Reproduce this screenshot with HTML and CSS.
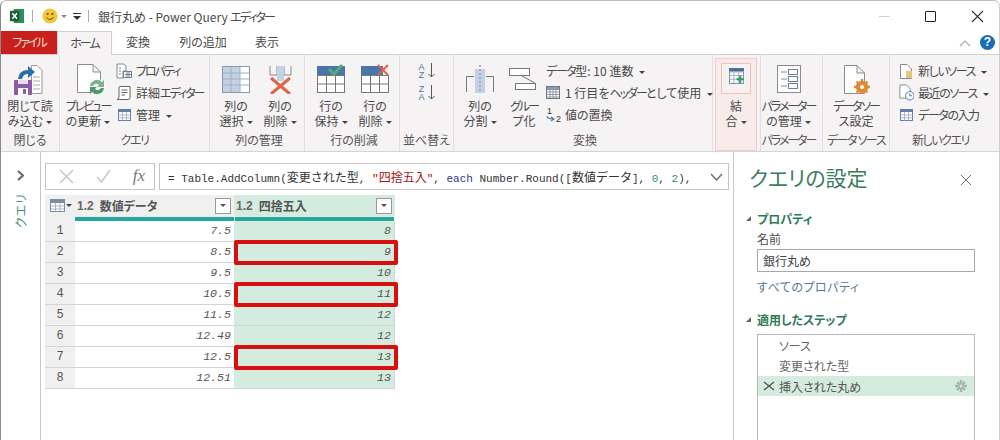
FILE: index.html
```html
<!DOCTYPE html>
<html lang="ja">
<head>
<meta charset="utf-8">
<title>銀行丸め - Power Query エディター</title>
<link rel="stylesheet" href="styles.css">
</head>
<body>
<div class="window">
  <header class="titlebar">
    <svg width="16" height="16" viewBox="0 0 17 17"><rect x="5" y="1" width="11" height="15" fill="#2f8f5b"/><rect x="1" y="3" width="10" height="11" fill="#185c37"/><path d="M3.500 5.500 L8.500 11.500 M8.500 5.500 L3.500 11.500" stroke="#fff" stroke-width="1.600"/></svg>
    <span class="qsep"></span>
    <svg width="16" height="16" viewBox="0 0 16 16"><circle cx="8" cy="8" r="7.600" fill="#f2c53d"/><circle cx="5.600" cy="6" r="1" fill="#5b4a10"/><circle cx="10.400" cy="6" r="1" fill="#5b4a10"/><path d="M4.500 9.500 Q8 13.500 11.500 9.500" fill="none" stroke="#5b4a10" stroke-width="1"/></svg>
    <span class="caret grey"></span>
    <svg class="qa-more" width="8" height="7" viewBox="0 0 8 7"><path d="M0 .5 H8" stroke="#333"/><path d="M0 3 H8 L4 7 Z" fill="#333"/></svg>
    <span class="qsep"></span>
    <span class="title">銀行丸め - Power Query <span class="k">エディター</span></span>
    <div class="winbtns">
      <span class="minbtn"></span>
      <span class="maxbtn"></span>
      <svg width="13" height="13" viewBox="0 0 13 13"><path d="M1 1 L12 12 M12 1 L1 12" stroke="#333" stroke-width="1.100"/></svg>
    </div>
  </header>
  <nav class="tabs">
    <span class="tab file"><span class="k">ファイル</span></span>
    <span class="tab active"><span class="k">ホーム</span></span>
    <span class="tab">変換</span>
    <span class="tab">列の追加</span>
    <span class="tab">表示</span>
    <span class="tabs-right">
      <svg width="12" height="8" viewBox="0 0 12 8"><path d="M1 7 L6 2 L11 7" fill="none" stroke="#aaa" stroke-width="1.200"/></svg>
      <span class="help">?</span>
    </span>
  </nav>
  <section class="ribbon">
    <div class="group g-close">
      <div class="gbody">
        <div class="big">
          <svg class="ic36" width="36" height="36" viewBox="0 0 36 36"><path d="M19.500 6.500 H25 L30 11.500 V34.500 H19.500 Z" fill="#fff" stroke="#999"/><path d="M21 18 H28 M21 22 H28 M21 26 H28 M21 30 H28" stroke="#aaa"/><rect x="2" y="21" width="18" height="15" rx="1" fill="#8f5aa6"/><rect x="6" y="21" width="10" height="4" fill="#e8dfee"/><rect x="6" y="29" width="10" height="7" fill="#fff"/><rect x="11" y="30" width="3" height="5" fill="#8f5aa6"/><path d="M6 20 Q7 11 16 11 V7 L23 13 L16 19 V15 Q11 15 10 20 Z" fill="#2c6fa8"/></svg>
          <span class="lbl">閉じて読<br>み込む<i class="caret"></i></span>
        </div>
      </div>
      <div class="glabel">閉じる</div>
    </div>
    <div class="group g-query">
      <div class="gbody">
        <div class="big w56">
          <svg class="ic36" width="36" height="36" viewBox="0 0 36 36"><path d="M7.500 5.500 H23 L30.500 13 V33.500 H7.500 Z M23 5.500 V13 H30.500" fill="#fff" stroke="#8c8c8c"/><circle cx="27" cy="28" r="8" fill="#fff"/><path d="M20 27 A7 7 0 0 1 32 23 L34 21 V28 H27 L29 26 A4 4 0 0 0 23 27 Z" fill="#7fb08f"/><path d="M34 29 A7 7 0 0 1 22 33 L20 35 V28 H27 L25 30 A4 4 0 0 0 31 29 Z" fill="#4f9a6a"/></svg>
          <span class="lbl"><span class="k">プレビュー</span><br>の更新<i class="caret"></i></span>
        </div>
        <div class="stack">
          <div class="sm"><svg width="16" height="16" viewBox="0 0 16 16"><path d="M1 1 H8 L10 3 V8 H7 V15 H1 Z" fill="#fff" stroke="#888"/><rect x="7.500" y="8.500" width="8" height="6" fill="#fff" stroke="#6c7f99"/><path d="M3 5 H5 M3 8 H5 M3 11 H5 M9 11.500 H15 M11 9 V14 M13 9 V14" stroke="#6c7f99"/></svg><span class="k">プロパティ</span></div>
          <div class="sm"><svg width="16" height="16" viewBox="0 0 16 16"><path d="M4 1.500 H14 V12 Q14 14.500 12 14.500 H1 Q3 14 3 12 V3 Q3 1.500 4 1.500 Z" fill="#fff" stroke="#666"/><path d="M5.500 5 H11.500 M5.500 7.500 H11.500 M5.500 10 H9" stroke="#666"/></svg><span>詳細<span class="k">エディター</span></span></div>
          <div class="sm"><svg width="16" height="16" viewBox="0 0 16 16"><rect x="2.500" y="2.500" width="12" height="11" fill="#fff" stroke="#5f7ea8"/><rect x="2.500" y="2.500" width="12" height="2.500" fill="#5f7ea8"/><path d="M2.500 8 H14.500 M2.500 10.800 H14.500 M6.500 5 V13.500 M10.500 5 V13.500" stroke="#a9b7ca"/></svg><span>管理<i class="caret gap"></i></span></div>
        </div>
      </div>
      <div class="glabel"><span class="k1">クエリ</span></div>
    </div>
    <div class="group g-cols">
      <div class="gbody">
        <div class="big w42">
          <svg class="ic" width="30" height="30" viewBox="0 0 30 30"><rect x="1.500" y="2.500" width="27" height="26" fill="#fff" stroke="#8a99ab"/><rect x="2" y="3" width="17" height="25" fill="#c3d1e2"/><path d="M2 9 H28 M2 15 H28 M2 21 H28 M10 3 V28 M19 3 V28" stroke="#9fb0c4"/></svg>
          <span class="lbl">列の<br>選択<i class="caret"></i></span>
        </div>
        <div class="big w42">
          <svg class="ic" width="30" height="30" viewBox="0 0 30 30"><path d="M5 2 V11 H26 V2 M12 2 V11 M19 2 V11" fill="none" stroke="#8a8a8a"/><rect x="12" y="2" width="7" height="15" fill="#c3d1e2"/><path d="M6 14 L25 30 M25 14 L6 30" stroke="#d9674a" stroke-width="3"/></svg>
          <span class="lbl">列の<br>削除<i class="caret"></i></span>
        </div>
      </div>
      <div class="glabel">列の管理</div>
    </div>
    <div class="group g-rows">
      <div class="gbody">
        <div class="big w42">
          <svg class="ic" width="30" height="30" viewBox="0 0 30 30"><rect x="1" y="2" width="28" height="9" fill="#4a75a8"/><rect x="1.500" y="11.500" width="27" height="17" fill="#fff" stroke="#777"/><path d="M1 20 H29 M10.500 11 V29 M19.500 11 V29" stroke="#777"/><path d="M13 5 L18 10 L26 1" fill="none" stroke="#59a97c" stroke-width="3"/></svg>
          <span class="lbl">行の<br>保持<i class="caret"></i></span>
        </div>
        <div class="big w42">
          <svg class="ic" width="30" height="30" viewBox="0 0 30 30"><rect x="1" y="2" width="22" height="9" fill="#4a75a8"/><rect x="1.500" y="11.500" width="27" height="17" fill="#fff" stroke="#777"/><path d="M1 20 H29 M10.500 11 V29 M19.500 11 V29" stroke="#777"/><path d="M18 1 L28 11 M28 1 L18 11" stroke="#d9674a" stroke-width="2"/></svg>
          <span class="lbl">行の<br>削除<i class="caret"></i></span>
        </div>
      </div>
      <div class="glabel">行の削減</div>
    </div>
    <div class="group g-sort">
      <div class="gbody">
        <div class="sortcol">
          <div class="sort"><span class="az">A<br>Z</span><svg width="7" height="15" viewBox="0 0 7 15"><path d="M3.500 0 V14 M.5 11 L3.500 14 L6.500 11" fill="none" stroke="#555"/></svg></div>
          <div class="sort"><span class="az">Z<br>A</span><svg width="7" height="15" viewBox="0 0 7 15"><path d="M3.500 0 V14 M.5 11 L3.500 14 L6.500 11" fill="none" stroke="#555"/></svg></div>
        </div>
      </div>
      <div class="glabel">並べ替え</div>
    </div>
    <div class="group g-trans">
      <div class="gbody">
        <div class="big w42">
          <svg class="ic" width="30" height="30" viewBox="0 0 30 30"><rect x="10" y="5" width="10" height="24" fill="#c3d1e2"/><path d="M15 1 V29" stroke="#9fb0c4" stroke-width="2" stroke-dasharray="2 2"/><path d="M1.500 28 V12.500 H9 M28.500 28 V12.500 H21" fill="none" stroke="#777"/></svg>
          <span class="lbl">列の<br>分割<i class="caret"></i></span>
        </div>
        <div class="big w42">
          <svg class="ic" width="30" height="30" viewBox="0 0 30 30"><rect x=".5" y="4.500" width="20" height="7" fill="#fff" stroke="#777"/><rect x="6.500" y="19.500" width="20" height="6" fill="#fff" stroke="#777"/><path d="M13 12 L26 19" stroke="#777"/></svg>
          <span class="lbl"><span class="k">グルー</span><br>プ化</span>
        </div>
        <div class="stack tstack">
          <div class="sm"><span><span class="k1">データ</span>型: 10 進数<i class="caret gap"></i></span></div>
          <div class="sm"><svg width="15" height="15" viewBox="0 0 15 15"><rect x=".5" y="1.500" width="13" height="12" fill="#fff" stroke="#777"/><rect x="1" y="2" width="12" height="3" fill="#8a9bb0"/><path d="M1 7 H13 M1 9.500 H13 M1 12 H13 M4 5 V13 M7 5 V13 M10 5 V13" stroke="#8a9bb0"/></svg><span>1 行目を<span class="k">ヘッダー</span>として使用<i class="caret gap"></i></span></div>
          <div class="sm"><svg width="15" height="16" viewBox="0 0 15 16"><text x="1" y="7" class="svgnum">1</text><text x="10" y="15" class="svgnum">2</text><path d="M1 9 Q1 12 7 12 M5 10 L8 12 L5 14" fill="none" stroke="#3f7cb3" stroke-width="1.200"/></svg><span>値の置換</span></div>
        </div>
      </div>
      <div class="glabel">変換</div>
    </div>
    <div class="group g-merge">
      <div class="gbody">
        <div class="big hl">
          <span class="hlbox"><svg width="17" height="17" viewBox="0 0 16 16"><rect x="1" y="1" width="14" height="3" fill="#4a6a94"/><rect x="1.500" y="4.500" width="13" height="11" fill="#fff" stroke="#8091a8"/><path d="M1.500 8 H14 M1.500 11.500 H14 M5.500 4 V15 M10 4 V15" stroke="#a9b7ca"/><path d="M11.500 8 V15 M8 11.500 H15" stroke="#2f9a6a" stroke-width="2"/></svg></span>
          <span class="lbl">結<br>合<i class="caret"></i></span>
        </div>
      </div>
    </div>
    <div class="group g-param">
      <div class="gbody">
        <div class="big w62">
          <svg class="ic" width="24" height="30" viewBox="0 -1 24 30"><rect x=".5" y=".5" width="23" height="27" fill="#fff" stroke="#8c8c8c"/><rect x="11.500" y="4.500" width="9" height="5" fill="#fff" stroke="#6c7f99"/><rect x="11.500" y="11.500" width="9" height="5" fill="#fff" stroke="#6c7f99"/><rect x="11.500" y="18.500" width="9" height="5" fill="#fff" stroke="#6c7f99"/><path d="M4 7 H10 M4 14 H10 M4 21 H10" stroke="#888"/></svg>
          <span class="lbl"><span class="k">パラメーター</span><br>の管理<i class="caret"></i></span>
        </div>
      </div>
      <div class="glabel"><span class="k">パラメーター</span></div>
    </div>
    <div class="group g-ds">
      <div class="gbody">
        <div class="big w62">
          <svg class="ic" width="30" height="30" viewBox="0 0 30 30"><path d="M3.500 1.500 H16 L23.500 9 V29.500 H3.500 Z M16 1.500 V9 H23.500" fill="#fff" stroke="#8c8c8c"/><circle cx="21" cy="23" r="4.500" fill="none" stroke="#e08a35" stroke-width="3.400"/><path d="M21 15 V30 M13 23 H29 M15.500 17.500 L26.500 28.500 M26.500 17.500 L15.500 28.500" stroke="#e08a35" stroke-width="2.400"/><circle cx="21" cy="23" r="2" fill="#fff"/></svg>
          <span class="lbl"><span class="k">データ ソー</span><br>ス設定</span>
        </div>
      </div>
      <div class="glabel"><span class="k1">データ ソース</span></div>
    </div>
    <div class="group g-new">
      <div class="gbody">
        <div class="stack">
          <div class="sm"><svg width="16" height="16" viewBox="0 0 16 16"><path d="M2.500 1.500 H9 L13.500 6 V15.500 H2.500 Z" fill="#fff" stroke="#888"/><rect x="8" y="8" width="6" height="7" fill="#e8c77d"/></svg><span><span class="k1">新しいソース</span><i class="caret gap"></i></span></div>
          <div class="sm"><svg width="16" height="17" viewBox="0 0 17 18"><path d="M2 1 H9 L13 5 V15 H2 Z" fill="#fff" stroke="#888"/><circle cx="12.500" cy="12.500" r="4.500" fill="#fff" stroke="#3f7cb3"/><path d="M12.500 10 V12.500 H15" fill="none" stroke="#3f7cb3"/></svg><span><span class="k1">最近のソース</span><i class="caret gap"></i></span></div>
          <div class="sm"><svg width="16" height="16" viewBox="0 0 16 16"><rect x="2.500" y="2.500" width="12" height="11" fill="#fff" stroke="#5f7ea8"/><rect x="2.500" y="2.500" width="12" height="2.500" fill="#5f7ea8"/><path d="M2.500 8 H14.500 M2.500 10.800 H14.500 M6.500 5 V13.500 M10.500 5 V13.500" stroke="#a9b7ca"/></svg><span class="k1">データの入力</span></div>
        </div>
      </div>
      <div class="glabel"><span class="k1">新しいクエリ</span></div>
    </div>
  </section>
  <main class="main">
    <aside class="rail">
      <svg width="7" height="11" viewBox="0 0 7 11"><path d="M1 1 L6 5.500 L1 10" fill="none" stroke="#666" stroke-width="2"/></svg>
      <span class="rail-label">クエリ</span>
    </aside>
    <div class="center">
      <div class="formulabar">
        <div class="fbtns">
          <svg width="15" height="15" viewBox="0 0 15 15"><path d="M1 1 L14 14 M14 1 L1 14" stroke="#c9c9c9" stroke-width="1.600"/></svg>
          <svg width="15" height="15" viewBox="0 0 15 15"><path d="M1 8 L5.500 13 L14 1" fill="none" stroke="#c9c9c9" stroke-width="1.600"/></svg>
          <span class="fx">fx</span>
        </div>
        <div class="formula"><span>= Table.AddColumn(<span class="cjk">変更された型</span>, <b class="str">"<span class="cjk">四捨五入</span>"</b>, <b class="kw">each</b> Number.Round([<span class="cjk">数値データ</span>], <b class="num">0</b>, <b class="num">2</b>),</span><svg width="13" height="8" viewBox="0 0 13 8"><path d="M1 1 L6.500 7 L12 1" fill="none" stroke="#777" stroke-width="1.600"/></svg></div>
      </div>
      <div class="table">
        <div class="corner"><svg width="15" height="13" viewBox="0 0 15 13"><rect x=".5" y=".5" width="14" height="12" fill="#fff" stroke="#7d8ca3"/><rect x="1" y="1" width="13" height="3" fill="#7d8ca3"/><path d="M1 7 H14 M1 10 H14 M5.500 4 V12 M10 4 V12" stroke="#a9b7ca"/></svg><i class="caret tiny"></i></div>
        <div class="colhead"><span class="ctype">1.2</span><span class="cname">数値データ</span><span class="filter"><i class="caret"></i></span></div>
        <div class="colhead sel"><span class="ctype">1.2</span><span class="cname">四捨五入</span><span class="filter"><i class="caret"></i></span></div>
        <div class="barspace"></div><div class="bar"></div><div class="bar second"></div>

        <div class="idx">1</div><div class="cell">7.5</div><div class="cell g">8</div>
        <div class="idx">2</div><div class="cell">8.5</div><div class="cell g mark">9</div>
        <div class="idx">3</div><div class="cell">9.5</div><div class="cell g">10</div>
        <div class="idx">4</div><div class="cell">10.5</div><div class="cell g mark">11</div>
        <div class="idx">5</div><div class="cell">11.5</div><div class="cell g">12</div>
        <div class="idx">6</div><div class="cell">12.49</div><div class="cell g">12</div>
        <div class="idx">7</div><div class="cell">12.5</div><div class="cell g mark">13</div>
        <div class="idx">8</div><div class="cell">12.51</div><div class="cell g">13</div>
      </div>
    </div>
    <aside class="settings">
      <div class="s-head"><h1>クエリの設定</h1><svg width="12" height="12" viewBox="0 0 12 12"><path d="M1 1 L11 11 M11 1 L1 11" stroke="#777" stroke-width="1"/></svg></div>
      <h2 class="s-sec"><i class="tri"></i>プロパティ</h2>
      <div class="s-name">名前</div>
      <div class="s-input">銀行丸め</div>
      <div class="s-link">すべてのプロパティ</div>
      <h2 class="s-sec steps-h"><i class="tri"></i>適用したステップ</h2>
      <div class="steps">
        <div class="step">ソース</div>
        <div class="step">変更された型</div>
        <div class="step on"><svg width="12" height="12" viewBox="0 0 12 12"><path d="M1 2 L11 10 M11 2 L1 10" stroke="#555" stroke-width="1.400"/></svg>挿入された丸め<svg class="gear" width="12" height="12" viewBox="0 0 12 12"><path d="M6 0 V12 M0 6 H12 M2 2 L10 10 M10 2 L2 10" stroke="#aab5ae" stroke-width="2.400"/><circle cx="6" cy="6" r="1.500" fill="#d4ecdf"/></svg></div>
      </div>
    </aside>
  </main>
</div>
</body>
</html>
```
FILE: styles.css
```css
* { box-sizing: border-box; }
html, body { margin: 0; padding: 0; }
body {
  width: 1000px; height: 440px; overflow: hidden; background: #fff; color: #4a4a4a;
  font-family: "Noto Sans CJK JP", "Noto Sans", sans-serif; font-size: 12px;
  font-feature-settings: "palt";
}
.window { width: 1000px; height: 440px; display: flex; flex-direction: column; border-left: 1px solid #8a8a8a; border-right: 1px solid #cfcfcf; border-top: 1px solid #bdbdbd; border-radius: 6px 6px 0 0; overflow: hidden; }
i { font-style: normal; }
.k { letter-spacing: -2px; }
.k1 { letter-spacing: -1.400px; }

.titlebar { height: 30px; flex: none; display: flex; align-items: center; padding: 0 15px 0 8px; }
.qsep { width: 1px; height: 12px; background: #aaa; margin: 0 9px 0 7px; }
.title { font-size: 12px; color: #4a4a4a; white-space: nowrap; }
.qa-more { margin-left: 6px; }
.caret { display: inline-block; width: 0; height: 0; border: 3px solid transparent; border-top: 3px solid #444; border-bottom: 0; margin-left: 3px; vertical-align: 2px; }
.caret.grey { border-top-color: #888; }
.caret.gap { margin-left: 6px; }
.caret.tiny { margin-left: 1px; vertical-align: 0; }
.winbtns { margin-left: auto; display: flex; align-items: center; gap: 35px; }
.minbtn { width: 11px; height: 1px; background: #cfcfcf; }
.maxbtn { width: 11px; height: 11px; border: 1px solid #222; border-radius: 1px; }

.tabs { height: 24px; flex: none; display: flex; align-items: stretch; border-bottom: 1px solid #d0d0d0; position: relative; font-size: 12px; }
.tab { width: 55px; text-align: center; color: #4a4a4a; line-height: 22px; white-space: nowrap; }
.tab:nth-child(3) { width: 52px; }
.tab:nth-child(4) { width: 78px; }
.tab:nth-child(5) { width: 50px; }
.tab.file { width: 56px; background: #c8201c; color: #f6d9d0; }
.tab.active { width: 55px; background: #f5f3f3; border: 1px solid #d0d0d0; border-bottom: 0; margin-bottom: -1px; z-index: 1; }
.tabs-right { margin-left: auto; display: flex; align-items: center; gap: 9px; padding-right: 4px; }
.help { width: 15px; height: 15px; border-radius: 50%; background: #1a6db5; color: #fff; font: bold 12px/15px "Liberation Sans", sans-serif; text-align: center; }

.ribbon { height: 97px; flex: none; display: flex; background: #f5f3f3; border-bottom: 1px solid #d4d4d4; }
.group { display: flex; flex-direction: column; border-right: 1px solid #e2e0e0; padding-top: 3px; }
.gbody { flex: 1; display: flex; min-height: 0; }
.glabel { height: 22px; text-align: center; line-height: 22px; font-size: 12px; color: #555; white-space: nowrap; }
.g-close { width: 59px; }
.g-query { width: 150px; }
.g-cols { width: 95px; padding-left: 4px; }
.g-rows { width: 95px; padding-left: 4px; }
.g-sort { width: 54px; }
.g-trans { width: 259px; padding-left: 4px; }
.g-merge { width: 48px; background: #f5f3f3; padding: 3px 4px 0 2px; }
.g-param { width: 62px; padding-right: 6px; }
.g-ds { width: 67px; }
.g-new { flex: 1; border-right: 0; padding-left: 8px; }
.g-new .glabel { margin-left: -8px; margin-right: 8px; }
.big { display: flex; flex-direction: column; align-items: center; width: 59px; }
.big.w56 { width: 56px; flex: none; }
.big.w42 { width: 44px; flex: none; }
.big.w62 { width: 100%; }
.ic { flex: none; margin: 6px 0 4px; }
.ic36 { flex: none; margin: 1px 0 3px; }
.lbl { font-size: 12px; line-height: 15px; text-align: center; color: #4a4a4a; white-space: nowrap; }
.stack { display: flex; flex-direction: column; padding-top: 2px; gap: 1px; }
.sm { height: 21px; display: flex; align-items: center; gap: 4px; white-space: nowrap; font-size: 12px; color: #4a4a4a; }
.svgnum { font: 9px "Liberation Sans", sans-serif; fill: #333; }
.sortcol { width: 54px; display: flex; flex-direction: column; align-items: center; gap: 6px; padding-top: 5px; }
.sort { display: flex; align-items: flex-start; gap: 3px; height: 16px; }
.az { font: 9px/8px "Liberation Sans", sans-serif; color: #4f73a3; text-align: center; }
.big.hl { width: 42px; background: #f8ecea; border: 1px solid #f0cdc6; height: 93px; flex: none; }
.hlbox { width: 30px; height: 31px; margin: 4px 0 4px; background: #f6f2f2; border: 1px solid #edc3ba; display: flex; justify-content: center; padding-top: 3px; }

.main { flex: 1; min-height: 0; display: flex; }
.rail { width: 40px; flex: none; border-right: 1px solid #c8c8c8; display: flex; flex-direction: column; align-items: center; padding-top: 18px; padding-right: 1px; }
.rail-label { writing-mode: vertical-rl; text-orientation: sideways; transform: rotate(180deg); margin-top: 12px; font-size: 12px; color: #3f8f72; letter-spacing: 1px; }
.center { width: 692px; flex: none; padding: 11px 4px 0 4px; display: flex; flex-direction: column; }
.formulabar { display: flex; gap: 4px; height: 27px; flex: none; }
.fbtns { width: 110px; border: 1px solid #c4c4c4; display: flex; align-items: center; justify-content: space-between; padding: 0 9px 0 13px; }
.fx { font: italic 17px/1 "Liberation Serif", serif; color: #777; margin-top: -3px; }
.formula { flex: 1; border: 1px solid #c4c4c4; display: flex; align-items: center; justify-content: space-between; padding: 0 5px 0 8px; font: 11px "Liberation Mono", "Noto Sans CJK JP", monospace; font-feature-settings: normal; color: #333; white-space: nowrap; }
.cjk { font-size: 12px; font-family: "Noto Sans CJK JP", sans-serif; }
b { font-weight: normal; }
.str { color: #a31515; }
.kw { color: #2c3a8c; }
.num { color: #2f8f6f; }

.table { display: grid; grid-template-columns: 30px 159px 161px; grid-template-rows: 21px 5px repeat(8, 21px); margin-top: 5px; width: 350px; }
.corner { background: #f0f0f0; display: flex; align-items: center; padding-left: 5px; }
.colhead { background: #f0f0f0; display: flex; align-items: center; font-size: 12px; font-weight: 700; color: #555; padding: 0 3px 0 2px; }
.colhead.sel { background: #d4ecdf; }
.ctype { font: bold 12px "Liberation Sans", sans-serif; color: #666; margin-right: 6px; }
.filter { margin-left: auto; width: 16px; height: 16px; border: 1px solid #999; background: #fff; display: flex; align-items: center; justify-content: center; }
.filter .caret { margin: 0; border-top-color: #555; vertical-align: 0; }
.barspace { background: #f0f0f0; }
.bar { background: #23a899; border-top: 1px solid #e8e8e8; }
.bar.second { border-left: 1px solid #fff; margin-right: 1px; }
.idx { background: #f0f0f0; border-bottom: 1px solid #d4d4d4; text-align: center; font: 12px/21px "Liberation Mono", monospace; color: #555; }
.cell { border-bottom: 1px solid #d4d4d4; font: italic 11.6px/20px "Liberation Mono", monospace; color: #555; text-align: right; padding-right: 3px; position: relative; }
.cell.g { background: #d4ecdf; border-right: 1px solid #d4d4d4; }
.cell.mark::after { content: ""; position: absolute; z-index: 2; left: 0; right: -4px; top: -2px; bottom: -3px; border: 4px solid #d80f0f; border-radius: 2px; }

.settings { flex: 1; border-left: 1px solid #c8c8c8; padding: 0 0 0 23px; display: flex; flex-direction: column; }
.s-head { display: flex; align-items: center; justify-content: space-between; height: 50px; padding: 0 27px 0 0; margin-left: -8px; }
.s-head svg { margin-top: 6px; }
h1 { margin: 0; font-size: 21px; font-weight: 400; color: #3b7d5e; }
.s-sec { margin: 7px 0 0; font-size: 12px; font-weight: 700; color: #2e7a58; height: 20px; line-height: 20px; position: relative; }
.tri { position: absolute; left: -11px; top: 7px; width: 0; height: 0; border-left: 5px solid transparent; border-bottom: 5px solid #666; }
.s-name { font-size: 12px; line-height: 20px; color: #4a4a4a; }
.s-input { width: 218px; height: 23px; border: 1px solid #a8a8a8; font-size: 12px; line-height: 21px; padding-left: 5px; color: #444; }
.s-link { font-size: 12px; line-height: 20px; color: #5a7a96; margin-top: 5px; letter-spacing: .5px; }
.steps-h { margin-top: 13px; }
.steps { width: 218px; flex: 1; margin-top: 4px; border: 1px solid #b8b8b8; border-bottom: 0; padding-top: 1px; }
.step { height: 20px; padding-left: 21px; font-size: 12px; line-height: 19px; color: #666; }
.step.on { background: #d4ecdf; color: #555; display: flex; align-items: center; padding-left: 5px; gap: 4px; }
.gear { margin-left: auto; margin-right: 7px; }
```
